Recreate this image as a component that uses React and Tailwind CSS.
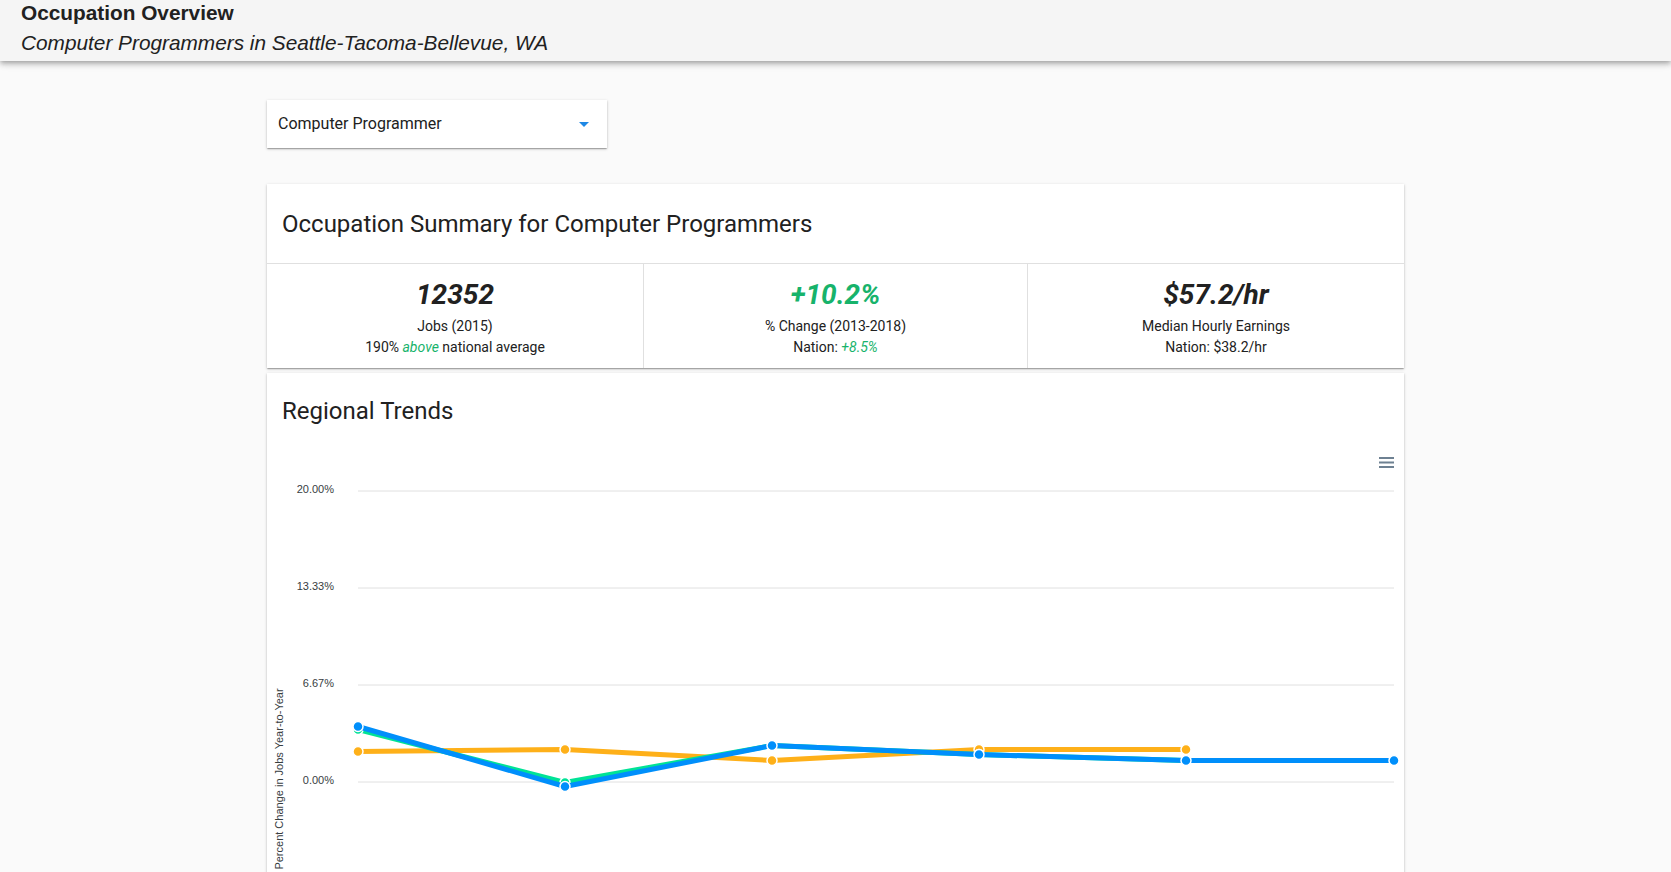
import React from "react";

const xs = [91, 298, 505, 712, 919, 1127];
const blue = [283.5, 343.5, 302.5, 311.5, 317.5, 317.5];
const green = [286.5, 339.5, 302.5, 311.5, 317.5, 317.5];
const orange = [308.5, 306.5, 317.5, 306.5, 306.5];

function Series({ ys, color }) {
  const pts = ys.map((y, i) => `${xs[i]},${y}`).join(" ");
  return (
    <g>
      <polyline points={pts} fill="none" stroke={color} strokeWidth="5" strokeLinejoin="round" strokeLinecap="butt" />
      {ys.map((y, i) => (
        <circle key={i} cx={xs[i]} cy={y} r="5" fill={color} stroke="#fff" strokeWidth="1.5" />
      ))}
    </g>
  );
}

function Chart() {
  const grid = [
    { y: 48, l: "20.00%" },
    { y: 145, l: "13.33%" },
    { y: 242, l: "6.67%" },
    { y: 339, l: "0.00%" },
  ];
  return (
    <svg width="1137" height="440" className="block" style={{ fontFamily: "Helvetica, Arial, 'Liberation Sans', sans-serif" }}>
      {grid.map((g) => (
        <g key={g.l}>
          <line x1="91" x2="1127" y1={g.y} y2={g.y} stroke="#e0e0e0" strokeWidth="1" />
          <text x="67" y={g.y - 0.5} textAnchor="end" dominantBaseline="middle" fontSize="11" fill="#373d3f">
            {g.l}
          </text>
        </g>
      ))}
      <line x1="91" x2="1127" y1="436" y2="436" stroke="#e0e0e0" strokeWidth="1" />
      <text
        x="0"
        y="0"
        transform="translate(16,336) rotate(-90)"
        textAnchor="middle"
        fontSize="11"
        fill="#373d3f"
      >
        Percent Change in Jobs Year-to-Year
      </text>
      <Series ys={orange} color="#FEB019" />
      <Series ys={green} color="#00E396" />
      <Series ys={blue} color="#008FFB" />
      <g fill="#6E8192">
        <rect x="1112" y="14" width="15" height="2" />
        <rect x="1112" y="18.5" width="15" height="2" />
        <rect x="1112" y="23" width="15" height="2" />
      </g>
    </svg>
  );
}

function Stat({ big, bigClass, label, sub, className }) {
  return (
    <div className={`flex flex-col items-center pt-[13px] pb-[10px] ${className}`}>
      <div className={`text-[28px] leading-[36px] font-bold italic ${bigClass}`}>{big}</div>
      <div className="mt-[3px] text-[14px] leading-[21px] text-[#212121]">{label}</div>
      <div className="text-[14px] leading-[21px] text-[#212121]">{sub}</div>
    </div>
  );
}

export default function App() {
  return (
    <div className="min-h-screen bg-[#fafafa] overflow-hidden" style={{ fontFamily: "Roboto, 'Liberation Sans', sans-serif" }}>
      <header
        className="h-[61px] bg-[#f5f5f5] px-[21px] shadow-[0_2px_4px_-1px_rgba(0,0,0,0.2),0_4px_5px_0_rgba(0,0,0,0.14),0_1px_10px_0_rgba(0,0,0,0.12)] relative z-10"
        style={{ fontFamily: "'Liberation Sans', Arial, sans-serif" }}
      >
        <div className="text-[20.8px] leading-[26px] font-bold text-[#212121]">Occupation Overview</div>
        <div className="mt-[2px] text-[20.8px] leading-[30px] italic text-[#212121]">Computer Programmers in Seattle-Tacoma-Bellevue, WA</div>
      </header>

      <main className="w-[1137px] mx-auto pt-[39px]">
        <div className="w-[340px] h-[48px] bg-white flex items-center justify-between pl-[11px] pr-[18px] shadow-[0_1px_3px_0_rgba(0,0,0,0.2),0_1px_1px_0_rgba(0,0,0,0.14),0_2px_1px_-1px_rgba(0,0,0,0.12)]">
          <span className="text-[16px] text-[#212121]">Computer Programmer</span>
          <svg width="10" height="5" viewBox="0 0 10 5">
            <path d="M0 0 L10 0 L5 5 Z" fill="#1e88e5" />
          </svg>
        </div>

        <section className="mt-[36px] bg-white shadow-[0_1px_3px_0_rgba(0,0,0,0.2),0_1px_1px_0_rgba(0,0,0,0.14),0_2px_1px_-1px_rgba(0,0,0,0.12)]">
          <div className="h-[80px] flex items-center px-[15px] border-b border-[#e0e0e0]">
            <h2 className="text-[24px] leading-[32px] text-[#212121]">Occupation Summary for Computer Programmers</h2>
          </div>
          <div className="flex">
            <Stat
              className="w-[377px] border-r border-[#e0e0e0]"
              big="12352"
              bigClass="text-[#212121]"
              label="Jobs (2015)"
              sub={
                <>
                  190% <em className="text-[#17b36b]">above</em> national average
                </>
              }
            />
            <Stat
              className="w-[384px] border-r border-[#e0e0e0]"
              big="+10.2%"
              bigClass="text-[#17b36b]"
              label="% Change (2013-2018)"
              sub={
                <>
                  Nation: <em className="text-[#17b36b]">+8.5%</em>
                </>
              }
            />
            <Stat className="flex-1" big="$57.2/hr" bigClass="text-[#212121]" label="Median Hourly Earnings" sub="Nation: $38.2/hr" />
          </div>
        </section>

        <section className="mt-[5px] bg-white shadow-[0_1px_3px_0_rgba(0,0,0,0.2),0_1px_1px_0_rgba(0,0,0,0.14),0_2px_1px_-1px_rgba(0,0,0,0.12)]">
          <div className="h-[70px] px-[15px] pt-[22px]">
            <h2 className="text-[24px] leading-[32px] text-[#212121]">Regional Trends</h2>
          </div>
          <Chart />
        </section>
      </main>
    </div>
  );
}
